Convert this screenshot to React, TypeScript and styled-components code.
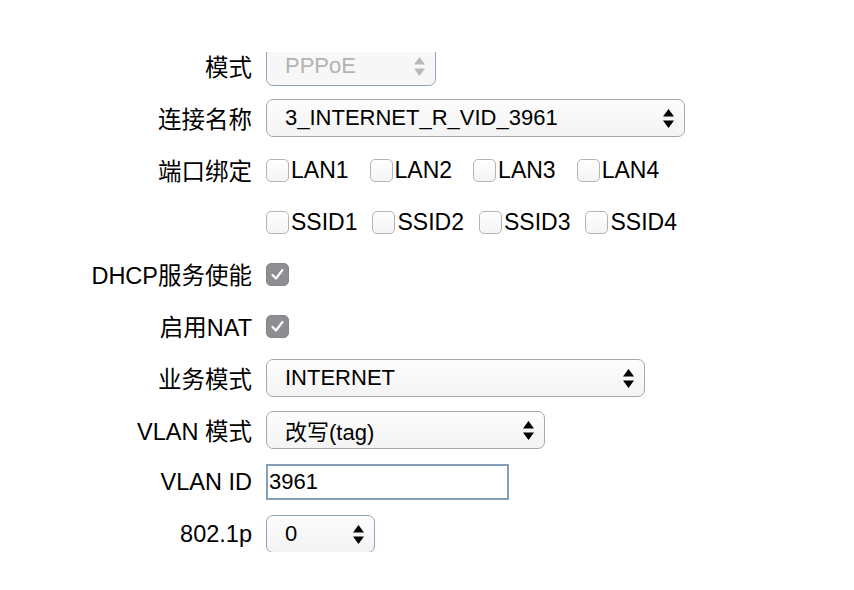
import React from "react";
import styled, { createGlobalStyle, css } from "styled-components";

const GlobalStyle = createGlobalStyle`
  html, body {
    margin: 0;
    padding: 0;
    background: #ffffff;
  }
  body {
    font-family: "Liberation Sans", "Noto Sans CJK SC", sans-serif;
    color: #000000;
  }
`;

const Viewport = styled.div`
  margin-top: 52px;
  height: 500px;
  overflow: hidden;
`;

const Form = styled.div`
  display: grid;
  grid-template-columns: 252px 1fr;
  grid-auto-rows: 40px;
  column-gap: 14px;
  row-gap: 12px;
  margin-top: -6px;
`;

const Label = styled.div`
  display: flex;
  align-items: center;
  justify-content: flex-end;
  font-size: 23.5px;
  white-space: nowrap;
`;

const Field = styled.div`
  display: flex;
  align-items: center;
`;

const SelectBox = styled.div<{ $width: number; $disabled?: boolean; $focus?: boolean }>`
  box-sizing: border-box;
  width: ${(p) => p.$width}px;
  height: 38px;
  display: flex;
  align-items: center;
  justify-content: space-between;
  padding: 0 9px 0 18px;
  border: 1.5px solid ${(p) => (p.$focus || p.$disabled ? "#8ca5bd" : "#a8a8a8")};
  border-radius: 7px;
  background: linear-gradient(#fdfdfd, #f3f3f3);
  font-size: 22px;
  color: ${(p) => (p.$disabled ? "#b3b3b3" : "#000000")};
  ${(p) =>
    p.$disabled &&
    css`
      height: 40px;
      background: #f7f7f7;
    `}
`;

const Input = styled.div`
  box-sizing: border-box;
  width: 243px;
  height: 36px;
  display: flex;
  align-items: center;
  padding-left: 1px;
  border: 2px solid #84a0b8;
  font-size: 22px;
  background: #ffffff;
`;

const CheckGroup = styled.div<{ $gap: number }>`
  display: flex;
  align-items: center;
  gap: ${(p) => p.$gap}px;
`;

const CheckItem = styled.span`
  display: flex;
  align-items: center;
  gap: 2px;
  font-size: 23px;
`;

const Box = styled.span<{ $checked?: boolean }>`
  box-sizing: border-box;
  width: 23px;
  height: 23px;
  border-radius: 5px;
  display: inline-flex;
  align-items: center;
  justify-content: center;
  ${(p) =>
    p.$checked
      ? css`
          background: #8e8e92;
          border: 1px solid #85858a;
        `
      : css`
          background: linear-gradient(#ffffff, #f4f4f4);
          border: 1px solid #b4b4b4;
        `}
`;

const Arrows = ({ color = "#000" }: { color?: string }) => (
  <svg width="13" height="21" viewBox="0 0 13 21">
    <path d="M6.5 1 L12 8.5 L1 8.5 Z" fill={color} />
    <path d="M1 12.5 L12 12.5 L6.5 20 Z" fill={color} />
  </svg>
);

const Tick = () => (
  <svg width="15" height="15" viewBox="0 0 15 15">
    <path
      d="M2.5 8 L6 11.5 L12.5 3"
      fill="none"
      stroke="#ffffff"
      strokeWidth="2.2"
      strokeLinecap="round"
      strokeLinejoin="round"
    />
  </svg>
);

const Check = ({ label, checked }: { label?: string; checked?: boolean }) => (
  <CheckItem>
    <Box $checked={checked}>{checked && <Tick />}</Box>
    {label}
  </CheckItem>
);

const Select = ({
  value,
  width,
  disabled,
  focus,
}: {
  value: string;
  width: number;
  disabled?: boolean;
  focus?: boolean;
}) => (
  <SelectBox $width={width} $disabled={disabled} $focus={focus}>
    <span>{value}</span>
    <Arrows color={disabled ? "#b8b8b8" : "#000"} />
  </SelectBox>
);

export default function App() {
  return (
    <>
      <GlobalStyle />
      <Viewport>
        <Form>
          <Label>模式</Label>
          <Field>
            <Select value="PPPoE" width={170} disabled />
          </Field>

          <Label>连接名称</Label>
          <Field>
            <Select value="3_INTERNET_R_VID_3961" width={419} />
          </Field>

          <Label>端口绑定</Label>
          <Field>
            <CheckGroup $gap={21}>
              {["LAN1", "LAN2", "LAN3", "LAN4"].map((l) => (
                <Check key={l} label={l} />
              ))}
            </CheckGroup>
          </Field>

          <Label />
          <Field>
            <CheckGroup $gap={15}>
              {["SSID1", "SSID2", "SSID3", "SSID4"].map((l) => (
                <Check key={l} label={l} />
              ))}
            </CheckGroup>
          </Field>

          <Label>DHCP服务使能</Label>
          <Field>
            <Check checked />
          </Field>

          <Label>启用NAT</Label>
          <Field>
            <Check checked />
          </Field>

          <Label>业务模式</Label>
          <Field>
            <Select value="INTERNET" width={379} />
          </Field>

          <Label>VLAN 模式</Label>
          <Field>
            <Select value="改写(tag)" width={279} />
          </Field>

          <Label>VLAN ID</Label>
          <Field>
            <Input>3961</Input>
          </Field>

          <Label>802.1p</Label>
          <Field>
            <Select value="0" width={109} focus />
          </Field>
        </Form>
      </Viewport>
    </>
  );
}
